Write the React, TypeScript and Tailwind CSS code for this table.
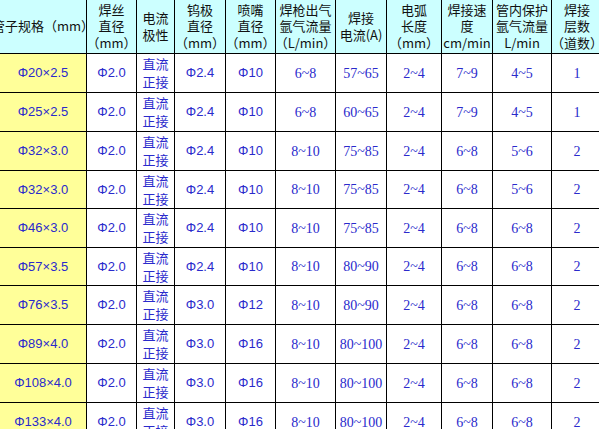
import React from 'react';

const cjk = '"Noto Sans CJK SC", sans-serif';

const headers: string[][] = [
  ['管子规格（mm）'],
  ['焊丝', '直径', '（mm）'],
  ['电流', '极性'],
  ['钨极', '直径', '（mm）'],
  ['喷嘴', '直径', '（mm）'],
  ['焊枪出气', '氩气流量', '（L/min）'],
  ['焊接', '电流(A)'],
  ['电弧', '长度', '（mm）'],
  ['焊接速', '度', 'cm/min'],
  ['管内保护', '氩气流量', 'L/min'],
  ['焊接', '层数', '（道数）'],
];

type Row = [string, string, string, string, string, string, string, string, string];

// pipe, tungsten, nozzle, gas, current, arc, speed, inner gas, passes
const rows: Row[] = [
  ['Φ20×2.5', 'Φ2.4', 'Φ10', '6~8', '57~65', '2~4', '7~9', '4~5', '1'],
  ['Φ25×2.5', 'Φ2.4', 'Φ10', '6~8', '60~65', '2~4', '7~9', '4~5', '1'],
  ['Φ32×3.0', 'Φ2.4', 'Φ10', '8~10', '75~85', '2~4', '6~8', '5~6', '2'],
  ['Φ32×3.0', 'Φ2.4', 'Φ10', '8~10', '75~85', '2~4', '6~8', '5~6', '2'],
  ['Φ46×3.0', 'Φ2.4', 'Φ10', '8~10', '75~85', '2~4', '6~8', '6~8', '2'],
  ['Φ57×3.5', 'Φ2.4', 'Φ10', '8~10', '80~90', '2~4', '6~8', '6~8', '2'],
  ['Φ76×3.5', 'Φ3.0', 'Φ12', '8~10', '80~90', '2~4', '6~8', '6~8', '2'],
  ['Φ89×4.0', 'Φ3.0', 'Φ16', '8~10', '80~100', '2~4', '6~8', '6~8', '2'],
  ['Φ108×4.0', 'Φ3.0', 'Φ16', '8~10', '80~100', '2~4', '6~8', '6~8', '2'],
  ['Φ133×4.0', 'Φ3.0', 'Φ16', '8~10', '80~100', '2~4', '6~8', '6~8', '2'],
];

const cell = 'flex items-center justify-center border-r border-b border-black overflow-hidden whitespace-nowrap';

function Sans({ v }: { v: string }) {
  return <span className="font-['Liberation_Sans',sans-serif] text-[13px]">{v}</span>;
}

function Serif({ v }: { v: string }) {
  return <span className="font-['Liberation_Serif',serif] text-[14px]">{v}</span>;
}

export default function App() {
  return (
    <div className="w-[599px] h-[429px] overflow-hidden bg-white">
      <div className="grid w-[603px] grid-cols-[87px_50px_38px_51px_50px_60px_51px_55px_51px_59px_51px] grid-rows-[54px_39px_39px_39px_38px_39px_38px_39px_39px_39px_39px] text-[#2a2acc]">
        {headers.map((lines, i) => (
          <div
            key={i}
            className={`${cell} flex-col bg-[#ccffff] text-[#111] text-[13px] leading-[16.5px]`}
            style={{ fontFamily: cjk }}
          >
            {lines.map((l, j) => (
              <span key={j}>{l}</span>
            ))}
          </div>
        ))}

        {rows.map((r, i) => (
          <React.Fragment key={i}>
            <div className={`${cell} bg-[#ffff99]`}>
              <Sans v={r[0]} />
            </div>
            <div className={cell}>
              <Sans v="Φ2.0" />
            </div>
            <div
              className={`${cell} flex-col text-[13px] leading-[18px]`}
              style={{ fontFamily: cjk }}
            >
              <span>直流</span>
              <span>正接</span>
            </div>
            <div className={cell}>
              <Sans v={r[1]} />
            </div>
            <div className={cell}>
              <Sans v={r[2]} />
            </div>
            {r.slice(3).map((v, j) => (
              <div key={j} className={cell}>
                <Serif v={v} />
              </div>
            ))}
          </React.Fragment>
        ))}
      </div>
    </div>
  );
}
